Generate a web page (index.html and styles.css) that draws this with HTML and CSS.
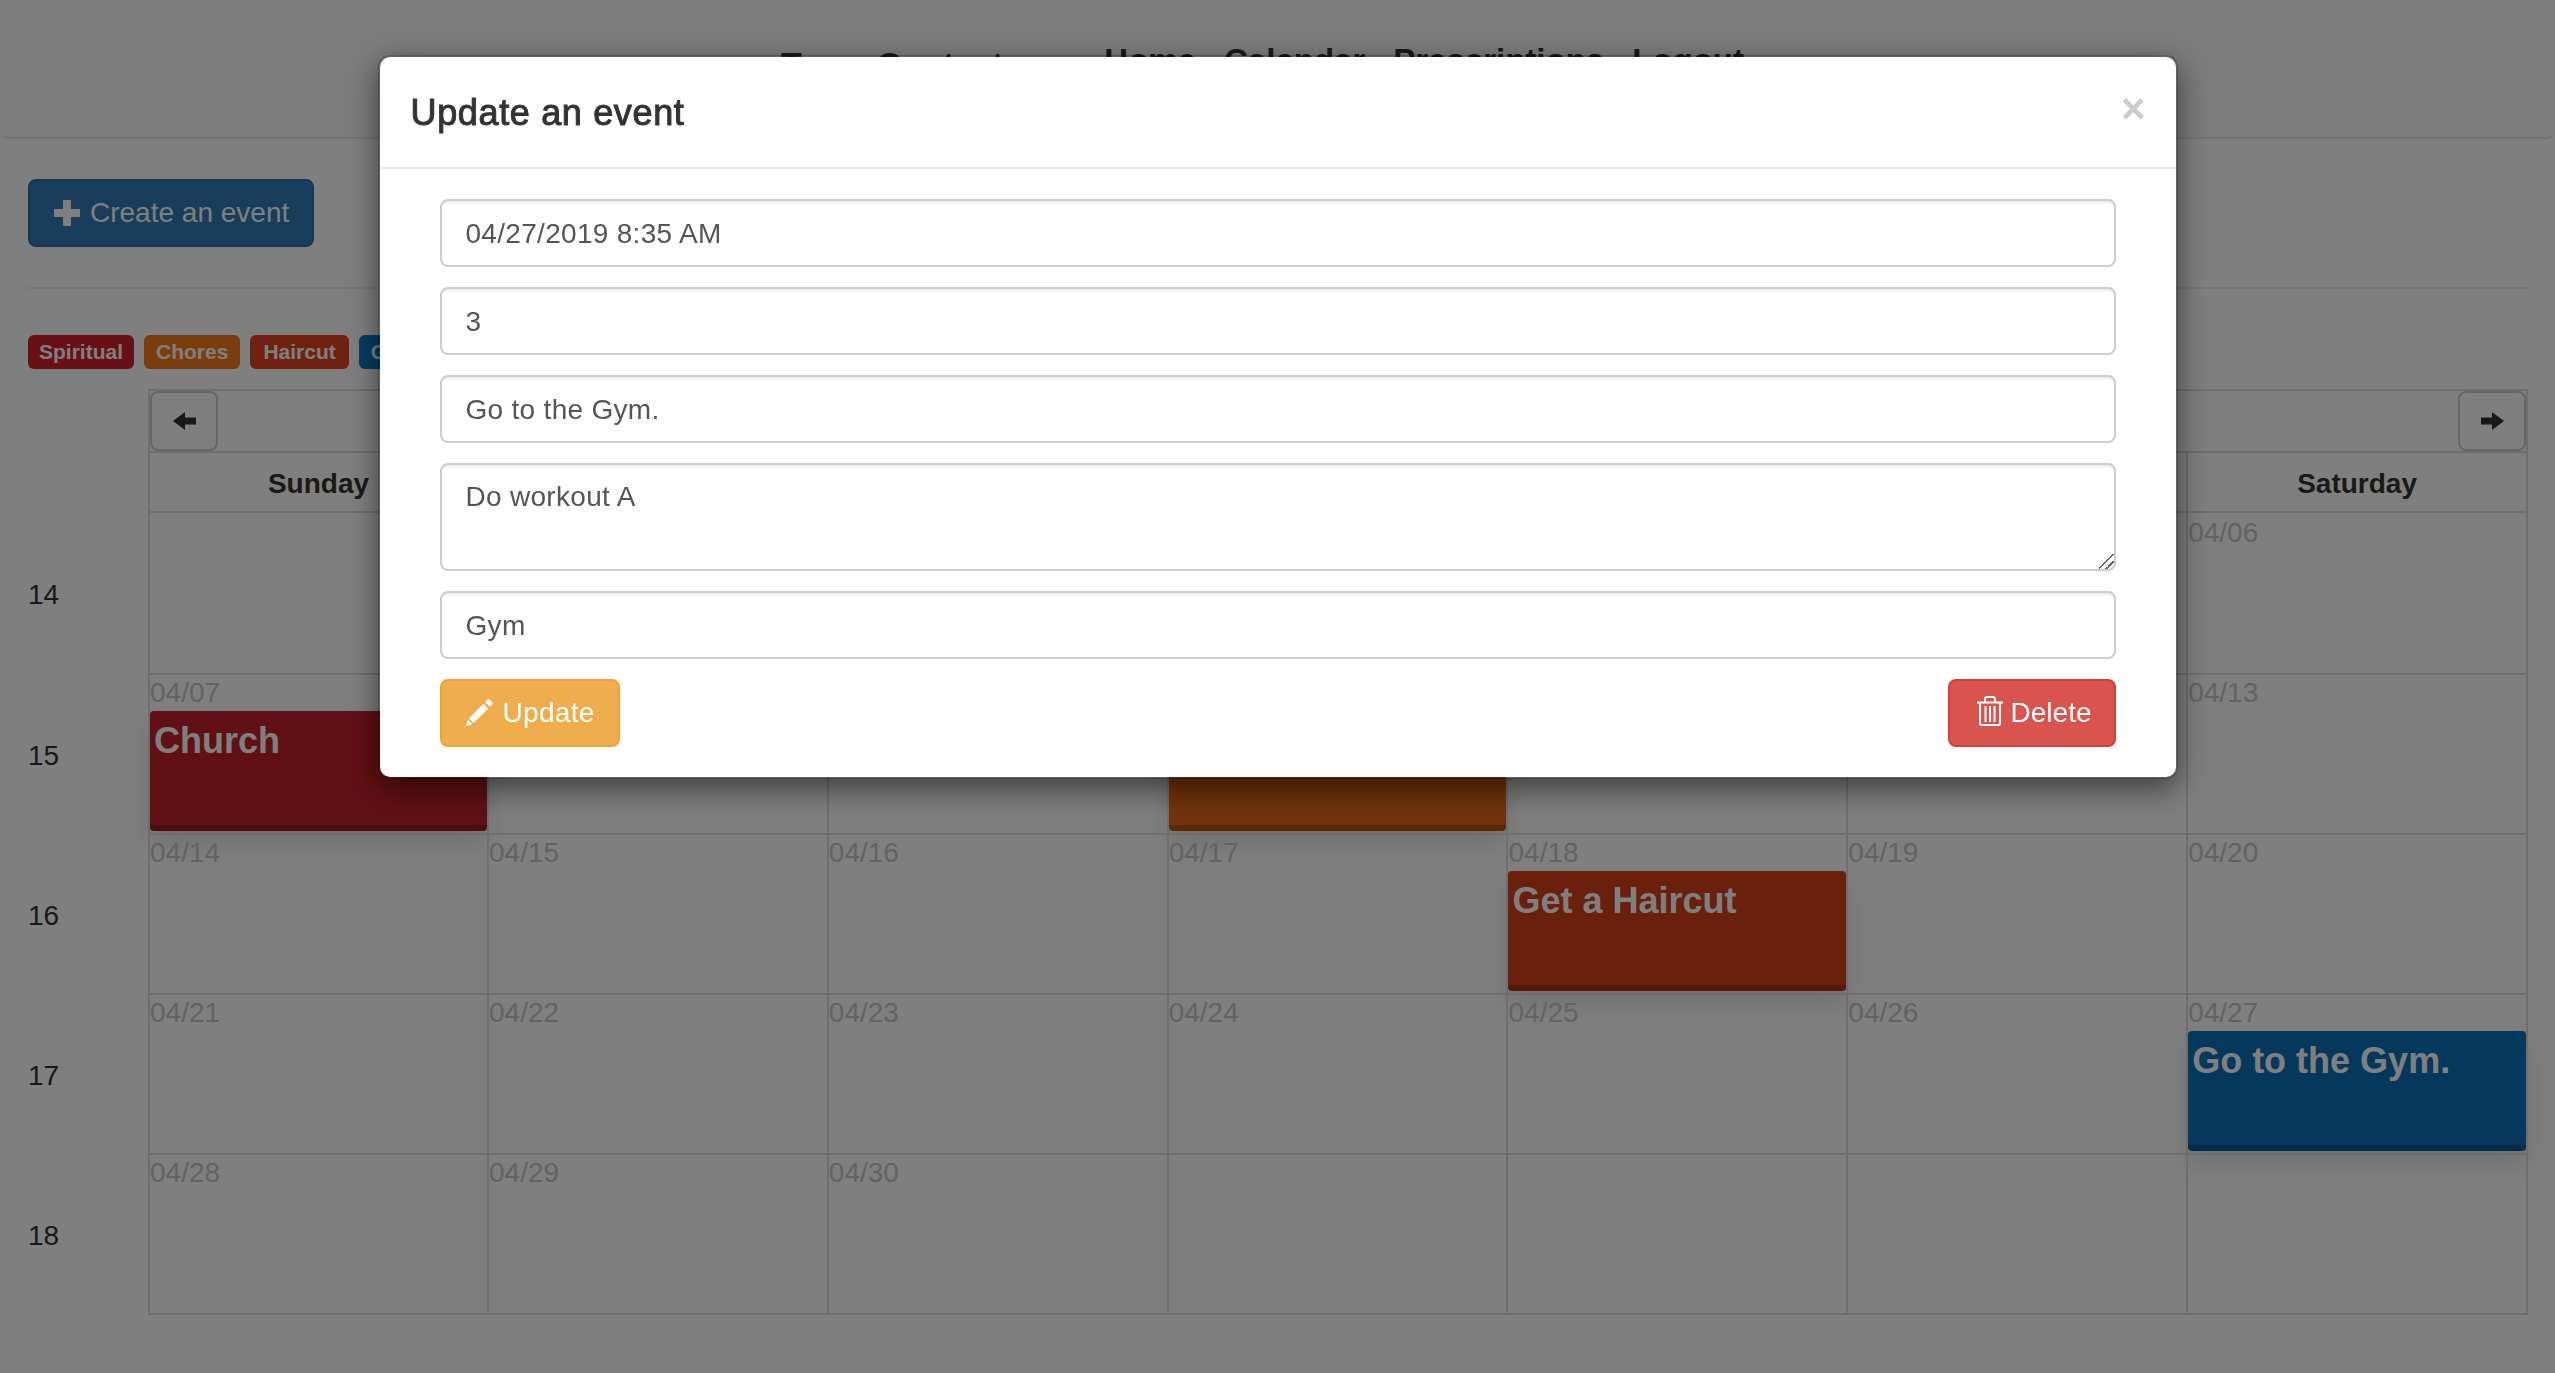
FILE: index.html
```html
<!DOCTYPE html>
<html lang="en">
<head>
<meta charset="utf-8">
<title>Calendar</title>
<link rel="stylesheet" href="styles.css">
</head>
<body>
<nav class="navbar">
  <a class="brand">Team Contact</a>
  <a class="nav-link">Home</a>
  <a class="nav-link">Calendar</a>
  <a class="nav-link">Prescriptions</a>
  <a class="nav-link">Logout</a>
</nav>
<main class="page">
  <button class="btn btn-primary" type="button">
    <svg class="icon-plus" viewBox="0 0 26 26"><path d="M10 0h6a1 1 0 0 1 1 1v8h8a1 1 0 0 1 1 1v6a1 1 0 0 1-1 1h-8v8a1 1 0 0 1-1 1h-6a1 1 0 0 1-1-1v-8H1a1 1 0 0 1-1-1v-6a1 1 0 0 1 1-1h8V1a1 1 0 0 1 1-1z"/></svg>
    Create an event
  </button>
  <hr class="rule">
  <div class="labels">
    <span class="label spiritual">Spiritual</span>
    <span class="label chores">Chores</span>
    <span class="label haircut">Haircut</span>
    <span class="label gym">Gym</span>
  </div>
  <table class="calendar">
    <colgroup><col class="week-col"><col class="first-day"><col span="6"></colgroup>
    <tr class="nav-row">
      <td class="week"></td>
      <td colspan="7">
        <div class="month-nav">
          <button class="arrow" type="button"><svg viewBox="0 0 23 18"><polygon points="0,9 12,0 12,5.5 23,5.5 23,12.5 12,12.5 12,18"/></svg></button>
          <button class="arrow" type="button"><svg viewBox="0 0 23 18"><polygon points="23,9 11,0 11,5.5 0,5.5 0,12.5 11,12.5 11,18"/></svg></button>
        </div>
      </td>
    </tr>
    <tr class="head-row">
      <td class="week"></td>
      <th>Sunday</th><th>Monday</th><th>Tuesday</th><th>Wednesday</th><th>Thursday</th><th>Friday</th><th>Saturday</th>
    </tr>
    <tr class="day-row first-row">
      <td class="week">14</td>
      <td></td>
      <td><div class="date">04/01</div></td>
      <td><div class="date">04/02</div></td>
      <td><div class="date">04/03</div></td>
      <td><div class="date">04/04</div></td>
      <td><div class="date">04/05</div></td>
      <td><div class="date">04/06</div></td>
    </tr>
    <tr class="day-row">
      <td class="week">15</td>
      <td><div class="date">04/07</div><div class="event spiritual-event">Church</div></td>
      <td><div class="date">04/08</div></td>
      <td><div class="date">04/09</div></td>
      <td><div class="date">04/10</div><div class="event chores-event">Chores</div></td>
      <td><div class="date">04/11</div></td>
      <td><div class="date">04/12</div></td>
      <td><div class="date">04/13</div></td>
    </tr>
    <tr class="day-row">
      <td class="week">16</td>
      <td><div class="date">04/14</div></td>
      <td><div class="date">04/15</div></td>
      <td><div class="date">04/16</div></td>
      <td><div class="date">04/17</div></td>
      <td><div class="date">04/18</div><div class="event haircut-event">Get a Haircut</div></td>
      <td><div class="date">04/19</div></td>
      <td><div class="date">04/20</div></td>
    </tr>
    <tr class="day-row">
      <td class="week">17</td>
      <td><div class="date">04/21</div></td>
      <td><div class="date">04/22</div></td>
      <td><div class="date">04/23</div></td>
      <td><div class="date">04/24</div></td>
      <td><div class="date">04/25</div></td>
      <td><div class="date">04/26</div></td>
      <td><div class="date">04/27</div><div class="event gym-event">Go to the Gym.</div></td>
    </tr>
    <tr class="day-row">
      <td class="week">18</td>
      <td><div class="date">04/28</div></td>
      <td><div class="date">04/29</div></td>
      <td><div class="date">04/30</div></td>
      <td></td><td></td><td></td><td></td>
    </tr>
  </table>
</main>
<div class="backdrop">
  <section class="modal">
    <header class="modal-header">
      <h4 class="modal-title">Update an event</h4>
      <button class="close" type="button">×</button>
    </header>
    <form class="modal-body">
      <input class="field" type="text" value="04/27/2019 8:35 AM">
      <input class="field" type="text" value="3">
      <input class="field" type="text" value="Go to the Gym.">
      <textarea class="field area">Do workout A</textarea>
      <input class="field" type="text" value="Gym">
      <div class="actions">
        <button class="btn btn-warning" type="button">
          <svg class="icon-pencil" viewBox="0 0 28 28"><polygon points="0,28 1.8,21.5 6.5,26.2"/><polygon points="3,20.3 17.5,5.8 22.2,10.5 7.7,25"/><path d="M19.2 4.1l2.6-2.6a1.2 1.2 0 0 1 1.7 0l3 3a1.2 1.2 0 0 1 0 1.7l-2.6 2.6z"/></svg>
          Update
        </button>
        <button class="btn btn-danger" type="button">
          <svg class="icon-trash" viewBox="0 0 26 30"><path d="M8 6V3.2C8 2 9 1 10.2 1h5.600C17 1 18 2 18 3.2V6M0 6.500h26M3 7v20.500C3 28.400 3.600 29 4.500 29h17c.9 0 1.500-.6 1.500-1.500V7M8.500 10v16M13 10v16M17.500 10v16"/></svg>
          Delete
        </button>
      </div>
    </form>
  </section>
</div>
</body>
</html>
```

FILE: styles.css
```css
* { box-sizing: border-box; }
html, body { margin: 0; height: 100%; overflow: hidden; }
body {
  font-family: "Liberation Sans", Arial, sans-serif;
  font-size: 28px;
  line-height: 40px;
  color: #333;
  background: #fff;
}

/* Navbar */
.navbar {
  display: flex;
  justify-content: center;
  align-items: flex-start;
  gap: 28px;
  height: 139px;
  padding: 42px 30px 0 0;
  background: #f8f8f8;
  border-bottom: 2px solid #e7e7e7;
  border-radius: 0 0 8px 8px;
  line-height: 38px;
  font-weight: 700;
}
.brand { font-size: 34px; margin: 3px 73px 0 0; }
.nav-link { font-size: 33px; }

/* Page */
.page { padding: 40px 27px 0 28px; }
.btn {
  display: inline-flex;
  align-items: center;
  gap: 10px;
  height: 68px;
  padding: 0 23px 0 24px;
  border: 2px solid transparent;
  border-radius: 8px;
  font: inherit;
  color: #fff;
  white-space: nowrap;
}
.btn svg { fill: #fff; flex: none; }
.btn-primary { background: #337ab7; border-color: #2e6da4; }
.btn-warning { background: #f0ad4e; border-color: #eea236; padding: 0 23px 0 24px; gap: 9px; letter-spacing: .3px; }
.btn-danger { background: #d9534f; border-color: #d43f3a; padding: 0 22px 0 27px; gap: 8px; }
.icon-plus { width: 26px; height: 26px; }
.icon-pencil { width: 28px; height: 28px; margin-top: -3px; }
.icon-trash { width: 26px; height: 30px; margin-top: -5px; fill: none !important; stroke: #fff; stroke-width: 2; }
.rule { margin: 40px 0 46px; border: 0; border-top: 2px solid #eee; }

.labels { display: flex; gap: 10px; margin-bottom: 20px; }
.label {
  height: 34px;
  padding: 0 12px;
  border-radius: 6px;
  color: #fff;
  font-size: 21px;
  font-weight: 700;
  line-height: 34px;
}
.spiritual { background: #d0202c; padding: 0 11px; }
.chores { background: #f47c1c; }
.haircut { background: #e0431e; padding: 0 13px; }
.gym { background: #0a7cc4; }

/* Calendar */
.calendar {
  width: 100%;
  table-layout: fixed;
  border-collapse: collapse;
}
.week-col { width: 121px; }
.first-day { width: 339px; }
.calendar td, .calendar th {
  padding: 0;
  border: 2px solid #ddd;
  vertical-align: top;
}
.calendar .week {
  border: 0;
  vertical-align: middle;
  padding-top: 3px;
}
.nav-row { height: 62px; }
.month-nav { display: flex; justify-content: space-between; padding: 0; }
.arrow {
  display: flex;
  align-items: center;
  justify-content: center;
  width: 68px;
  height: 60px;
  padding: 0;
  background: #fff;
  border: 2px solid #ccc;
  border-radius: 8px;
}
.arrow svg { width: 23px; height: 18px; fill: #333; }
.head-row { height: 60px; }
.calendar th { vertical-align: middle; padding-top: 3px; font-weight: 700; text-align: center; }
.day-row { height: 160px; }
.first-row { height: 162px; }
.first-row .date { margin-top: 2px; }
.date { height: 36px; line-height: 36px; color: #c6c6c6; }
.event {
  height: 120px;
  padding: 0 4px;
  border-bottom: 6px solid rgba(0, 0, 0, .2);
  border-radius: 4px;
  color: #fff;
  font-size: 36px;
  font-weight: 700;
  line-height: 60px;
  box-shadow: 0 14px 26px rgba(0, 0, 0, .12);
}
.spiritual-event { background: #c2202a; }
.chores-event { background: #e4671a; }
.haircut-event { background: #d6401c; }
.gym-event { background: #0a70ba; }

/* Modal */
.backdrop {
  position: fixed;
  inset: 0;
  display: flex;
  justify-content: center;
  align-items: flex-start;
  padding-top: 55px;
  background: rgba(0, 0, 0, .5);
}
.modal {
  width: 1800px;
  background: #fff;
  background-clip: padding-box;
  border: 2px solid rgba(0, 0, 0, .2);
  border-radius: 12px;
  box-shadow: 0 10px 30px rgba(0, 0, 0, .5);
}
.modal-header {
  display: flex;
  justify-content: space-between;
  align-items: flex-start;
  height: 112px;
  padding: 31px 30px 29px 31px;
  border-bottom: 2px solid #e5e5e5;
}
.modal-title {
  margin: 0;
  font-size: 36px;
  font-weight: 400;
  line-height: 50px;
  letter-spacing: .65px;
  -webkit-text-stroke: 1px #333;
}
.close {
  margin-top: 0;
  padding: 0;
  border: 0;
  background: none;
  color: #ccc;
  font: 700 42px/42px "Liberation Sans", Arial, sans-serif;
}
.modal-body {
  display: flex;
  flex-direction: column;
  gap: 20px;
  padding: 30px 60px;
}
.field {
  width: 100%;
  height: 68px;
  padding: 13px 24px 11px;
  border: 2px solid #ccc;
  border-radius: 8px;
  background: #fff;
  box-shadow: inset 0 2px 2px rgba(0, 0, 0, .075);
  color: #555;
  font: 28px/40px "Liberation Sans", Arial, sans-serif;
  letter-spacing: .3px;
  outline: 0;
}
.area { display: block; height: 108px; padding: 12px 24px; resize: vertical; }
.area::-webkit-resizer {
  background: linear-gradient(135deg,
    transparent 44%, #666 44%, #666 52%,
    transparent 52%, transparent 70%, #666 70%, #666 78%,
    transparent 78%);
}
.actions { display: flex; justify-content: space-between; }
```
